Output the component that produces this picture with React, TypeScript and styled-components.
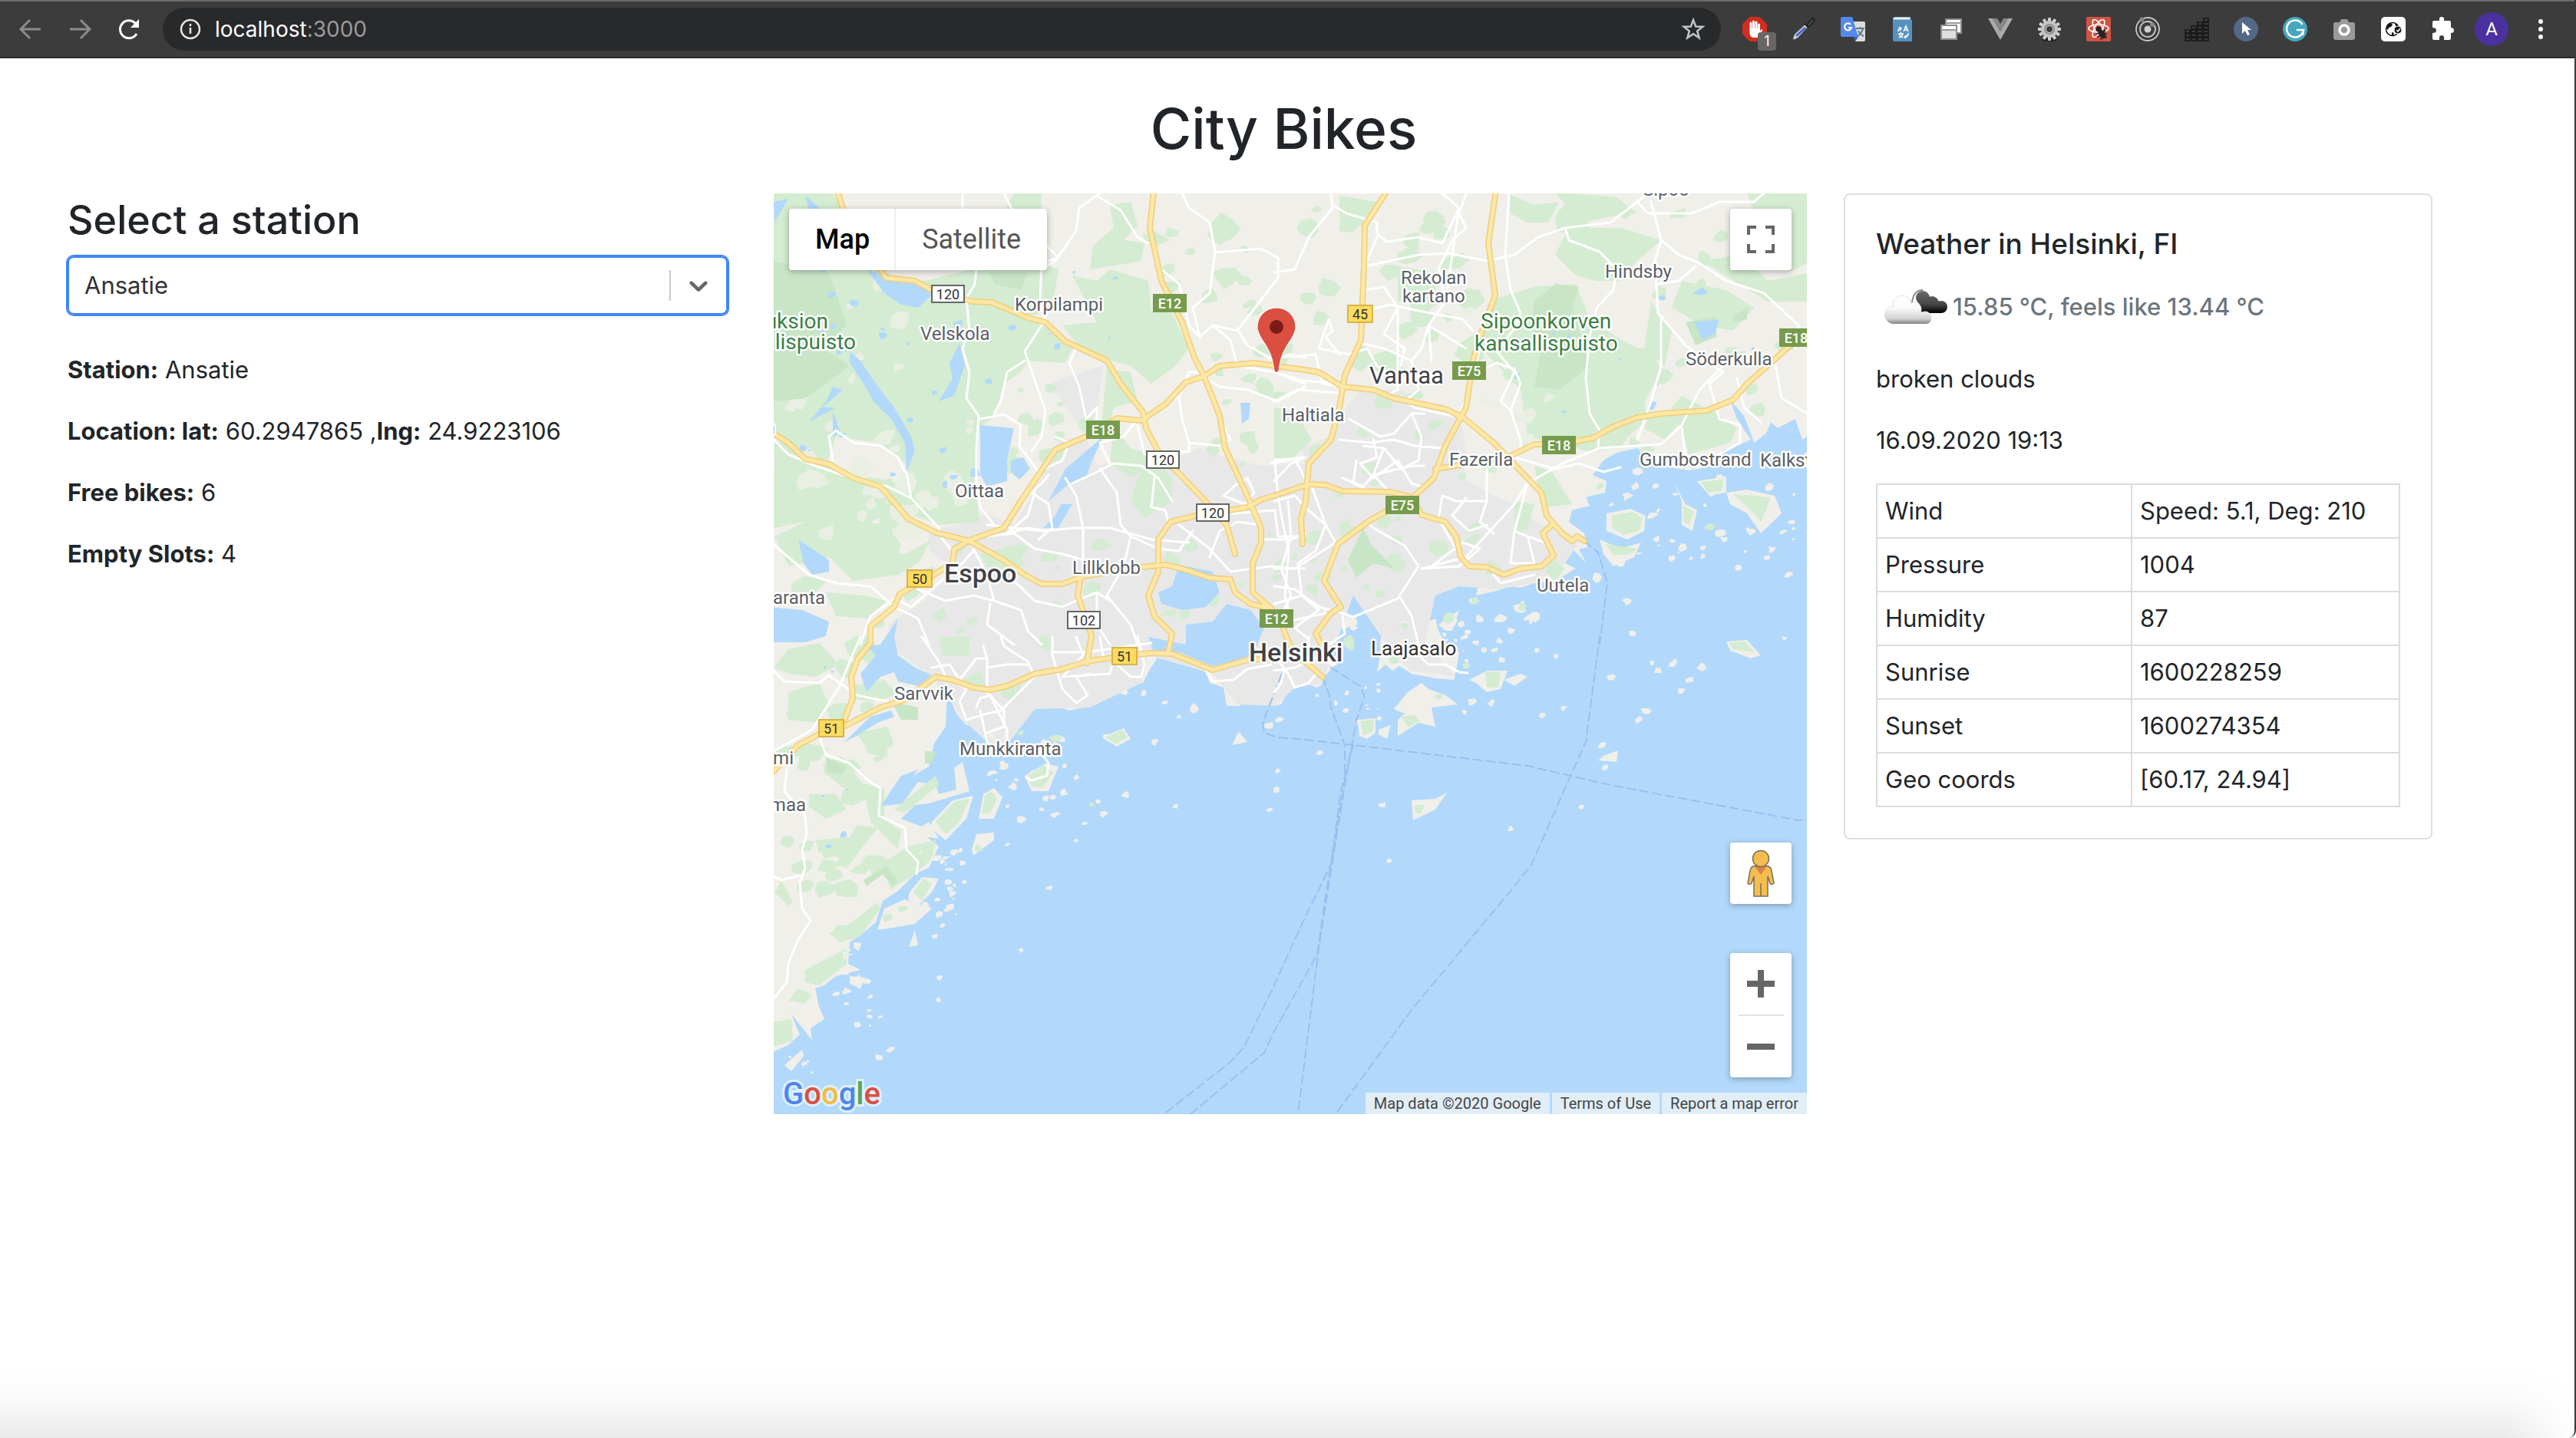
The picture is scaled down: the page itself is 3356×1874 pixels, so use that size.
import React, { useState } from 'react';
import styled, { createGlobalStyle } from 'styled-components';

const sans = '"Inter", "Liberation Sans", sans-serif';
const mapFont = 'Roboto, "Liberation Sans", sans-serif';

const GlobalStyle = createGlobalStyle`
  *, *::before, *::after { box-sizing: border-box; }
  body {
    margin: 0;
    background: #fff;
    color: #212529;
    font-family: ${sans};
    font-size: 31px;
    line-height: 48px;
  }
  button { font: inherit; border: 0; padding: 0; background: none; cursor: pointer; }
`;

/* ---------- browser bar ---------- */

const Page = styled.div`
  min-height: 100vh;
  display: flex;
  flex-direction: column;
  background: #fff;
  border-right: 2px solid #3b3a40;
  border-bottom-right-radius: 10px;
`;

const Bar = styled.header`
  height: 76px;
  display: flex;
  align-items: center;
  padding: 0 12px 0 8px;
  background: #3c3c3c;
  border-top: 2px solid #6b6b6b;
  border-bottom: 2px solid #29292b;
`;

const BarButton = styled.button<{ $dim?: boolean }>`
  width: 64px;
  height: 56px;
  flex: none;
  display: flex;
  align-items: center;
  justify-content: center;
  position: relative;
  color: ${(p) => (p.$dim ? '#8b8b8b' : '#fff')};
`;

const Omnibox = styled.div`
  flex: 1;
  height: 56px;
  margin: 0 12px;
  padding: 0 20px;
  display: flex;
  align-items: center;
  gap: 16px;
  border-radius: 28px;
  background: #28292b;
  color: #fff;
  font-size: 28px;
`;

const Address = styled.span`
  flex: 1;
  span { color: #9a9b9d; }
`;

const StarButton = styled.button`
  display: flex;
  color: #c4c5c6;
`;

const Badge = styled.span`
  position: absolute;
  right: 4px;
  bottom: 0;
  width: 24px;
  height: 24px;
  border-radius: 4px;
  background: #666;
  color: #fff;
  font-size: 18px;
  line-height: 24px;
  text-align: center;
`;

const Avatar = styled.span`
  width: 44px;
  height: 44px;
  border-radius: 50%;
  background: #4b309f;
  color: #fff;
  font: 24px/44px ${mapFont};
  text-align: center;
`;

const Icon = ({ size = 32, children }: { size?: number; children: React.ReactNode }) => (
  <svg width={size} height={size} viewBox="0 0 32 32" fill="none" aria-hidden="true">
    {children}
  </svg>
);

const gearTeeth = Array.from({ length: 12 }, (_, i) => i * 30);

const extensions: { name: string; icon: React.ReactNode; badge?: string }[] = [
  {
    name: 'Ad blocker',
    badge: '1',
    icon: (
      <Icon>
        <path d="M9.500 0h13L32 9.500v13L22.500 32h-13L0 22.500v-13z" fill="#d22d20" />
        <path d="M11 17V8M14.500 16V6M18 16V7M21.500 18v-8" stroke="#fff" strokeWidth="3" strokeLinecap="round" />
        <path d="M9.500 15h13.500v3l2.500-2q1.500 1-.5 4l-4 6q-1 1-3 1h-4q-4.500-1-4.500-6z" fill="#fff" />
      </Icon>
    ),
  },
  {
    name: 'Color picker',
    icon: (
      <Icon>
        <path d="M2 29l2-6L18 10l3 3L8 27l-4 2z" fill="#dfe3ea" stroke="#8a8f99" />
        <path d="M5 26l1-3 11-10 2 2L8 25z" fill="#3f62c9" />
        <path d="M17 9l5 5M20 11l7-9 3 2-7 9z" stroke="#222" strokeWidth="2" fill="#555" />
      </Icon>
    ),
  },
  {
    name: 'Translate',
    icon: (
      <Icon>
        <path d="M14 6h16q2 0 2 2v22q0 2-2 2H19z" fill="#dcdcdc" />
        <path d="M20 15h11M25.500 13v3M29 15q-1 6-7 10M23 18q2 5 7 7" stroke="#5f7d86" strokeWidth="2" />
        <path d="M0 2q0-2 2-2h13l8 26H2q-2 0-2-2z" fill="#5488ea" />
        <path d="M17 26h6l-4 6z" fill="#3460c4" />
        <path d="M13 10a4.500 4.500 0 1 0 1 4h-4" stroke="#fff" strokeWidth="2.200" />
      </Icon>
    ),
  },
  {
    name: 'Dictionary',
    icon: (
      <Icon>
        <path d="M4 3q0-3 3-3h20v4H4z" fill="#f3f7fa" stroke="#3c7fb2" />
        <path d="M4 4h25v28H6q-2 0-2-2z" fill="#5592c0" />
        <path d="M18 19l3-7 3 7M19 17h4M11 19q0-4 3-4M12 13l3 2-2 3M11 22h7M14.500 20v2M17 22q-1 4-5 5M12 23l5 4M24 21q0 5-4 5M22 24l-3 2 2 2" stroke="#fff" strokeWidth="1.500" />
      </Icon>
    ),
  },
  {
    name: 'Windows',
    icon: (
      <Icon>
        <path d="M9 3h20v18H9z" fill="#fff" stroke="#8c8c8c" strokeWidth="2" />
        <path d="M9 8h20" stroke="#999" strokeWidth="2" />
        <path d="M3 11h20v18H3z" fill="#dedede" stroke="#8c8c8c" strokeWidth="2" />
        <path d="M4 14h18" stroke="#fff" strokeWidth="4" />
        <path d="M3 17h20" stroke="#999" strokeWidth="2" />
      </Icon>
    ),
  },
  {
    name: 'Vue devtools',
    icon: (
      <Icon>
        <path d="M0 2h6l10 17L26 2h6L16 30z" fill="#aaa" />
        <path d="M6 2h6l4 7 4-7h6L16 19z" fill="#878787" />
      </Icon>
    ),
  },
  {
    name: 'Settings',
    icon: (
      <Icon>
        <ellipse cx="16" cy="30" rx="10" ry="2" fill="#222" />
        {gearTeeth.map((a) => (
          <rect key={a} x="14" y="1" width="4" height="7" rx="1" fill="#cfcfcf" transform={`rotate(${a} 16 16)`} />
        ))}
        <circle cx="16" cy="16" r="11" fill="#c4c4c4" />
        <circle cx="16" cy="16" r="7" fill="#8d8d8d" />
        <circle cx="16" cy="16" r="4.500" fill="#3c3c3c" stroke="#ddd" />
      </Icon>
    ),
  },
  {
    name: 'React devtools',
    icon: (
      <Icon>
        <rect width="32" height="32" rx="2" fill="#cf5443" />
        <g stroke="#fff" strokeWidth="1.600">
          <ellipse cx="16" cy="15" rx="13" ry="5" />
          <ellipse cx="16" cy="15" rx="13" ry="5" transform="rotate(60 16 15)" />
          <ellipse cx="16" cy="15" rx="13" ry="5" transform="rotate(120 16 15)" />
        </g>
        <circle cx="16" cy="16" r="3.500" fill="#2a2222" />
        <ellipse cx="20" cy="22" rx="4" ry="6" fill="#2a2222" transform="rotate(-30 20 22)" />
        <path d="M13 22l12-4M14 26l13-4M18 29l9-3M23 16l2 12" stroke="#2a2222" strokeWidth="1.500" />
      </Icon>
    ),
  },
  {
    name: 'Orbit',
    icon: (
      <Icon>
        <circle cx="16" cy="16" r="15" stroke="#c8c8c8" strokeWidth="1.800" />
        <circle cx="16" cy="16" r="10" stroke="#c8c8c8" strokeWidth="1.800" />
        <circle cx="16" cy="16" r="4.500" fill="#cfcfcf" />
        <circle cx="8.500" cy="3.500" r="3" fill="#858585" />
        <circle cx="22" cy="10" r="3" fill="#858585" />
      </Icon>
    ),
  },
  {
    name: 'Equalizer',
    icon: (
      <Icon>
        {[3, 4, 5, 6].flatMap((n, col) =>
          Array.from({ length: n }, (_, i) => (
            <rect key={`${col}-${i}`} x={1 + col * 8} y={27 - i * 5} width="6" height="4" stroke="#161616" strokeWidth="1.500" />
          )),
        )}
      </Icon>
    ),
  },
  {
    name: 'Pointer',
    icon: (
      <Icon>
        <circle cx="16" cy="16" r="16" fill="#536987" />
        <path d="M11 7v15l4-4 3 6 3-1-3-6h5z" fill="#fff" />
      </Icon>
    ),
  },
  {
    name: 'Writing check',
    icon: (
      <Icon>
        <circle cx="16" cy="16" r="16" fill="#45a6bf" />
        <path d="M25 9a11 11 0 1 0 2 8h-8M27 17l-1 6" stroke="#fff" strokeWidth="2.500" strokeLinecap="round" />
      </Icon>
    ),
  },
  {
    name: 'Screenshot',
    icon: (
      <Icon>
        <path d="M4 7h6l2-4h8l2 4h5q3 0 3 3v17q0 3-3 3H5q-3 0-3-3V10q0-3 2-3z" fill="#9a9a9a" />
        <circle cx="16" cy="17" r="6" stroke="#fff" strokeWidth="3.500" />
      </Icon>
    ),
  },
  {
    name: 'Cookies',
    icon: (
      <Icon>
        <rect width="32" height="32" rx="5" fill="#fff" />
        <circle cx="15" cy="16" r="8.500" fill="#fff" stroke="#111" strokeWidth="1.500" />
        <path d="M7 15l2-5 4-2 2 2-2 3-3 1-1 3zM18 8l3 2 1 3-3-1zM14 20l3 1-1 3h-2z" fill="#111" />
        <circle cx="22" cy="17" r="5" fill="#111" stroke="#fff" />
        <path d="M20 17l2 2 3-4" stroke="#fff" strokeWidth="1.500" />
      </Icon>
    ),
  },
  {
    name: 'Extensions',
    icon: (
      <Icon>
        <path d="M3 7q0-2 2-2h7q-1-5 3-5t3 5h7q2 0 2 2v7q4 0 4 3.500T27 21v7q0 2-2 2h-7q1-6-3-6t-3 6H5q-2 0-2-2v-7q5 0 5-3.500T3 14z" fill="#fff" />
      </Icon>
    ),
  },
];

/* ---------- page layout ---------- */

const Main = styled.main`
  flex: 1;
  padding: 44px 185px 0 88px;
`;

const Title = styled.h1`
  margin: 0 0 36px 88px;
  font-size: 73px;
  line-height: 96px;
  font-weight: 500;
  text-align: center;
`;

const Columns = styled.div`
  display: grid;
  grid-template-columns: 872fr 1346fr 767fr;
  column-gap: 48px;
  align-items: start;
`;

const StationColumn = styled.section`
  padding-right: 12px;
`;

const FieldLabel = styled.label`
  display: block;
  margin-bottom: 12px;
  font-size: 52px;
  line-height: 70px;
  font-weight: 500;
`;

const SelectBox = styled.div`
  display: flex;
  align-items: center;
  height: 76px;
  margin-bottom: 48px;
  padding-right: 16px;
  border: 2px solid #3f86f7;
  border-radius: 8px;
  box-shadow: 0 0 0 2px #3f86f7;
`;

const Select = styled.select`
  flex: 1;
  height: 72px;
  padding: 0 20px;
  appearance: none;
  border: 0;
  outline: 0;
  background: none;
  color: #333;
  font: 31px/48px ${sans};
`;

const Separator = styled.span`
  width: 2px;
  height: 40px;
  margin-right: 16px;
  background: #ccc;
`;

const Fact = styled.p`
  margin: 0 0 32px;
  b { font-weight: 700; }
`;

/* ---------- weather ---------- */

const Card = styled.section`
  padding: 40px;
  border: 2px solid #dfdfdf;
  border-radius: 8px;
`;

const CardTitle = styled.h2`
  margin: 0 0 8px;
  font-size: 37px;
  line-height: 48px;
  font-weight: 500;
`;

const Temperature = styled.div`
  display: flex;
  align-items: center;
  margin-bottom: 20px;
  color: #6c757d;
  font-weight: 500;
`;

const CardText = styled.p`
  margin: 0 0 32px;
`;

const Table = styled.table`
  width: 100%;
  border-collapse: collapse;
  td, th {
    height: 70px;
    padding: 0 10px;
    border: 2px solid #dcdcdc;
    font-weight: 400;
    text-align: left;
    white-space: nowrap;
  }
  th { width: 332px; }
`;

const readings: [string, string][] = [
  ['Wind', 'Speed: 5.1, Deg: 210'],
  ['Pressure', '1004'],
  ['Humidity', '87'],
  ['Sunrise', '1600228259'],
  ['Sunset', '1600274354'],
  ['Geo coords', '[60.17, 24.94]'],
];

const CloudIcon = () => (
  <svg width="100" height="100" viewBox="0 0 100 100" aria-label="broken clouds" role="img">
    <defs>
      <linearGradient id="dark" gradientUnits="userSpaceOnUse" x1="0" y1="30" x2="0" y2="58">
        <stop offset="0" stopColor="#6a6a6a" />
        <stop offset="0.600" stopColor="#454545" />
        <stop offset="1" stopColor="#000" />
      </linearGradient>
      <linearGradient id="light" gradientUnits="userSpaceOnUse" x1="0" y1="34" x2="0" y2="73">
        <stop offset="0" stopColor="#fff" />
        <stop offset="0.450" stopColor="#fafafa" />
        <stop offset="0.800" stopColor="#d2d2d2" />
        <stop offset="1" stopColor="#777" />
      </linearGradient>
    </defs>
    <path d="M47 44q2-16 14-16" stroke="#8a8a8a" strokeWidth="2" fill="none" />
    <g fill="url(#dark)">
      <circle cx="61" cy="38" r="9" />
      <circle cx="73" cy="45" r="9" />
      <circle cx="85" cy="50" r="8" />
      <path d="M54 38h20l12 20H60z" />
    </g>
    <g fill="url(#light)" stroke="#e4e4e4">
      <circle cx="34" cy="47" r="12" />
      <circle cx="22" cy="60" r="11" />
      <circle cx="50" cy="53" r="9" />
      <circle cx="64" cy="64" r="8" />
    </g>
    <path d="M23 50l12-9 14 8 9 12 7-4q7 3 7 8 0 7-7 7H22q-9-1-9-10z" fill="url(#light)" />
  </svg>
);

/* ---------- map geometry ---------- */

// Shapes are surveyed on four sheets; each has its origin and units per map pixel.
const sheets: Record<string, [number, number, number, number]> = {
  nw: [-8, -12, 2.24, 2.613],
  ne: [652, -12, 2.24, 2.613],
  sw: [-8, 578, 2.24, 2.489],
  se: [652, 578, 2.24, 2.489],
};

const toPoints = (def: string): [number, number][] => {
  let sheet = sheets.nw;
  const out: [number, number][] = [];
  def.trim().split(/\s+/).forEach((t) => {
    if (sheets[t]) {
      sheet = sheets[t];
    } else {
      const [x, y] = t.split(',').map(Number);
      out.push([Math.round(sheet[0] + x / sheet[2]), Math.round(sheet[1] + y / sheet[3])]);
    }
  });
  return out;
};
const line = (def: string) => 'M' + toPoints(def).map((p) => p.join(' ')).join('L');
const area = (defs: string[]) => defs.map((d) => line(d) + 'Z').join('');
const lines = (defs: string[]) => defs.map(line).join('');

const random = (seed: number) => () => {
  seed = (seed * 1664525 + 1013904223) % 4294967296;
  return seed / 4294967296;
};

const blob = (cx: number, cy: number, r: number, rnd: () => number) => {
  const n = 7;
  let d = '';
  const turn = rnd() * 6;
  const flat = 0.6 + rnd() * 0.4;
  for (let i = 0; i < n; i++) {
    const a = turn + (i / n) * Math.PI * 2;
    const q = r * (0.55 + rnd() * 0.65);
    const x = Math.cos(a) * q;
    const y = Math.sin(a) * q * flat;
    d += `${i ? 'L' : 'M'}${Math.round(cx + x + y * 0.3)} ${Math.round(cy + y - x * 0.3)}`;
  }
  return d + 'Z';
};

const scatter = (boxes: [number, number, number, number, number, number][], seed: number) => {
  const rnd = random(seed);
  return boxes
    .map(([x, y, w, h, n, r]) =>
      Array.from({ length: n }, () => blob(x + rnd() * w, y + rnd() * h, r * (0.4 + rnd()), rnd)).join(''),
    )
    .join('');
};

const blobsAt = (def: string, r: number, seed: number) => {
  const rnd = random(seed);
  return toPoints(def).map(([x, y]) => blob(x, y, r * (0.7 + rnd() * 0.7), rnd)).join('');
};

const mainland = area([
  `nw 0,0 ne 1600,0 1600,860 1568,850 1540,870 1520,800 1470,830 1450,810 1435,850 1400,880 1390,850 1370,790 1330,735 1350,800 1390,870 1340,895 1310,905 1290,960
   1210,975 1130,960 1060,900 1040,905 1000,915 960,940 930,990 970,1010 965,1050 910,1065 920,1095 870,1110 860,1150 905,1190 915,1235 890,1245 912,1290 870,1240 850,1290 880,1310
   820,1350 760,1360 720,1375 690,1370 650,1385 590,1400 600,1340 630,1300 660,1210 625,1250 600,1300 560,1330 560,1370 500,1370 470,1400 450,1440 430,1500 470,1480 480,1520 500,1568
   se 540,50 530,110 525,140 470,135 400,120 365,95 345,110 325,90 300,115 310,60 ne 310,1568 315,1500 330,1450 380,1430 330,1410 280,1440 265,1400 275,1380 320,1370 335,1320 285,1270 265,1290 215,1345 200,1290 210,1250 190,1240 180,1300
   215,1400 200,1460 240,1480 245,1500 180,1520 150,1568 se 180,90 145,130 138,155 125,165 100,155 60,165 42,170 20,220 0,225
   sw 1485,215 1470,180 1425,190 1445,120 1400,110 1375,130 1380,225 1340,225 1330,165 1290,150 1275,105 1240,85 1140,62 1110,115 1095,150 1040,150 960,180 940,225 880,240 830,220 780,235 725,285 700,350 730,360
   645,350 630,290 580,285 550,250 525,180 520,290 485,345 470,420 440,440 395,480 330,550 395,540 440,470 490,480 500,510 550,495 545,425 570,405 590,500 530,520 470,540 430,545 390,590 450,615 470,600 500,655
   465,650 500,680 470,750 430,770 380,825 335,855 315,925 290,950 240,990 235,1060 270,1080 200,1100 165,1130 140,1140 150,1200 165,1240 125,1270 130,1310 110,1280 70,1225 95,1290 60,1325 0,1355`,
]);

const urban = area([
  `nw 470,1180 560,1160 640,1120 720,1160 800,1000 850,870 930,860 960,960 1050,940 1160,960 1200,930 1260,900 1340,930 1440,960 1568,950 ne 80,900 180,850 210,760 250,700 380,700 400,740 540,780 560,900 550,1000 640,1060 700,1090
   780,1160 900,1200 850,1290 760,1360 650,1380 540,1370 470,1400 440,1568 se 530,130 400,110 350,60 ne 230,1400 200,1500 se 140,150 60,165 0,225 sw 1370,220 1300,120 1110,60 1090,150 940,230 780,235 700,350 640,340 580,280
   480,130 380,50 nw 350,1500 460,1420 540,1300 470,1250`,
  'nw 820,680 860,660 980,620 960,780 930,860 860,740',
]);

const parks = area([
  'nw 0,31 190,31 240,110 330,300 420,340 600,290 720,31 800,31 790,270 850,290 830,420 770,450 890,560 870,610 760,600 740,640 690,680 660,790 620,830 600,1000 620,1150 500,1160 430,1130 380,1060 410,960 330,880 200,860 170,960 100,940 0,840',
  'nw 1000,70 1060,60 1080,140 1040,190 1100,200 1090,260 1000,280 940,290 950,210 1010,150',
  'nw 890,310 960,330 1000,290 1110,330 1120,430 1180,440 1230,560 1190,620 1120,680 1060,620 980,590 900,540 860,480 960,470',
  'nw 990,630 1060,640 1080,740 1010,760 990,850 975,820',
  'nw 1010,820 1060,900 1150,930 1130,960 1060,1000 1000,950',
  'nw 20,870 180,960 330,1040 360,1120 280,1160 210,1240 110,1150 18,1170',
  'nw 20,1200 110,1150 250,1240 400,1260 480,1210 440,1290 380,1330 250,1350 180,1270 60,1300',
  'nw 170,1390 280,1400 350,1420 290,1480 200,1470',
  'nw 250,1170 350,1150 390,1230 370,1290 270,1300',
  'nw 620,1260 720,1230 750,1290 700,1340 640,1300',
  'nw 1130,930 1180,1000 1180,1080 1100,1140 1060,1080 1080,1000',
  'ne 650,390 760,350 880,340 920,460 1000,520 1060,560 1090,650 1080,780 1010,900 920,910 850,890 740,860 720,700 620,580 600,500',
  'ne 860,150 1010,150 1130,190 1050,270 1010,330 940,330 880,310 820,240',
  'ne 970,560 1100,560 1130,640 1070,760 1110,780 1010,880 930,820 910,700',
  'ne 1100,780 1200,790 1140,870 1080,830',
  'ne 1190,720 1290,780 1350,830 1330,880 1210,920 1180,820 1160,760',
  'ne 860,31 1000,45 1060,100 980,110 900,130 820,31',
  'ne 680,31 760,70 830,60 800,130 740,130 690,100',
  'ne 1190,330 1320,360 1400,420 1340,500 1250,480 1160,420',
  'ne 1250,260 1360,240 1440,330 1568,300 1568,400 1440,400 1340,330',
  'ne 1380,31 1568,31 1568,260 1500,300 1430,170',
  'ne 1100,400 1160,500 1140,620 1080,560',
  'ne 360,280 470,300 470,380 360,400',
  'ne 190,40 300,60 260,140 190,110',
  'ne 0,760 60,770 110,870 50,940 0,930',
  'ne 760,960 810,980 870,1090 800,1100 770,1040',
  'ne 700,1080 760,1090 740,1170 700,1200',
  'ne 800,1270 850,1310 820,1350 790,1320',
  'sw 60,40 150,20 210,90 140,130 60,120 18,100',
  'sw 60,180 150,150 180,220 150,280 60,270',
  'sw 240,160 340,140 380,190 310,210 240,200',
  'sw 100,340 180,360 150,400 90,410',
  'sw 180,400 240,420 280,480 220,490 180,450',
  'sw 260,310 350,290 370,350 300,380',
  'sw 120,510 200,510 230,560 170,590 120,550',
  'sw 280,480 340,490 340,590 390,630 380,690 300,600',
  'sw 370,560 490,450 500,480 400,570',
  'sw 140,660 240,650 220,720 150,700',
  'sw 200,740 260,610 320,620 230,750',
  'sw 330,740 410,680 490,660 480,720 430,770 360,820',
  'sw 180,960 240,930 320,860 330,880 270,970 210,990',
  'sw 110,1080 230,1010 230,1060 150,1130 110,1120',
  'sw 18,1250 70,1240 75,1310 18,1330',
  'sw 20,830 40,790 75,860 60,870',
  'sw 60,1180 90,1140 130,1160 110,1190',
  'sw 500,0 590,0 590,60 510,60',
  'sw 570,140 620,110 640,170 590,165',
  'sw 670,160 740,140 730,200 690,200',
]);

const deepParks = area([
  'nw 18,260 180,300 230,480 160,560 240,620 110,730 18,740',
  'nw 650,300 760,300 740,360 660,340',
  'ne 760,400 820,340 890,350 870,420 920,620 830,700 760,690 780,560 750,480',
  'ne 1200,470 1290,450 1290,520 1230,550',
  'ne 1340,450 1380,420 1380,460 1340,470',
  'ne 260,1170 285,1230 330,1280 350,1310 290,1290 240,1340 215,1280',
  'sw 280,790 345,745 380,790 365,810 335,770 290,810',
  'sw 360,210 440,230 440,270 390,270',
  'sw 460,370 490,370 480,410 460,410',
  'sw 170,390 230,420 220,445 175,440',
]);

const lakes = area([
  'nw 240,570 270,600 310,670 370,760 420,860 430,910 405,980 400,880 360,800 310,740 280,680 240,610',
  'nw 290,290 370,330 440,330 480,380 440,420 390,410 340,370',
  'nw 560,540 575,620 545,720 500,740 540,660 530,610',
  'nw 620,820 720,830 700,940 700,1010 640,1030 620,990',
  'nw 710,940 745,930 765,970 735,1005 710,980',
  'nw 980,860 940,960 930,1000 880,1020 820,1080 870,970',
  'nw 855,1090 890,1090 870,1130 850,1170 805,1170 840,1130',
  'nw 90,1210 180,1280 180,1320 130,1330 105,1290',
  'nw 0,1440 100,1450 180,1490 170,1540 110,1560 0,1560',
  'nw 1380,745 1410,745 1405,800 1385,815',
  'nw 190,690 220,700 160,760 200,760 120,810 170,740',
  'nw 190,770 210,840 190,860',
  'nw 110,40 160,90 120,90',
  'nw 18,60 60,50 20,130',
  'nw 1200,1295 1300,1320 1320,1390 1280,1440 1210,1450 1150,1430 1140,1390 1180,1370',
  'nw 1220,1500 1300,1490 1340,1430 1410,1450 1450,1510 1430,1568 sw 1410,70 1300,95 1200,50 1125,45 1110,0 nw 1220,1568',
  'nw 380,1480 330,1568 sw 290,30 315,60 270,120 290,180 330,130 370,115 380,145 440,160 480,125 430,100 380,60 370,0',
  'ne 1225,470 1300,460 1285,510 1250,530',
  'ne 1220,370 1250,350 1265,370 1240,380',
  'sw 360,240 300,260 225,340 260,320 320,280 370,260',
  'sw 440,430 390,450 330,550 380,520',
]);

const islands =
  area([
    'ne 970,1120 1040,1105 1085,1130 1080,1180 1030,1210 970,1180',
    'ne 1235,1010 1320,995 1320,1050 1270,1060',
    'ne 1320,1050 1380,1040 1460,1060 1480,1120 1420,1190 1380,1120 1330,1090',
    'ne 1165,1015 1200,1090 1235,1110 1220,1180 1190,1160 1190,1080',
    'ne 950,1210 1010,1240 1070,1220 1050,1270 990,1300 960,1260',
    'ne 480,1500 540,1450 520,1520 500,1520',
    'se 430,150 450,170 500,190 535,220 460,230 470,290 420,280 360,320 360,270 380,250 350,235 390,180',
    'se 570,140 620,110 680,110 660,170 620,180 590,150',
    'se 670,140 720,120 740,130 700,160',
    'se 245,270 295,265 295,310 270,330 248,320',
    'se 305,300 340,285 330,330 305,315',
    'se 1320,15 1380,10 1420,60 1390,70 1330,45',
    'se 400,530 470,525 505,505 470,560 405,595',
    'se 960,385 1003,368 1000,405 945,400',
    'sw 480,600 540,530 600,515 580,590 520,660 475,620',
    'sw 630,510 660,490 685,520 660,590 615,590',
    'sw 750,450 810,410 850,420 820,500 770,500',
    'sw 975,325 1040,295 1060,330 1020,355',
    'sw 415,830 450,780 500,785 480,830 440,870 410,850',
    'sw 320,950 340,880 400,850 480,880 430,930 380,940',
    'sw 50,1390 100,1340 105,1360 70,1410',
    'sw 1355,350 1375,305 1400,340',
    'sw 595,690 610,640 660,635 660,660 600,710',
    'sw 412,1005 430,950 440,1000',
    'sw 240,1100 285,1105 270,1140 240,1125',
  ]) +
  blobsAt('sw 1160,215 1200,260 1245,235 1190,550 1045,510 900,660 820,815 925,605 980,575 900,455 965,535 1130,340 985,320 1095,185 1040,180 700,675 690,420 655,440 740,1015 485,970 510,935 500,1105 497,1178 360,1340 325,1365 230,1190 235,1150 265,1110 200,1160 260,1000 535,755 525,795 490,720 1460,285 1485,495 1465,560 1490,435 855,330 830,520 790,430', 5, 5) +
  blobsAt('se 1105,85 1120,110 985,130 1190,175 1245,100 1215,140 1165,85 1085,240 1062,268 785,253 635,215 575,210 555,245 845,230 645,40 768,42 825,62 180,215 125,190 210,240 305,175 315,545 690,622 335,728 897,553 965,423 957,350 15,270 135,375 1490,5', 5, 9) +
  blobsAt('ne 1055,1030 1110,1030 1060,980 1160,1215 1115,1210 1105,1130 1270,1170 1300,1190 1355,1305 1440,1270 940,1340 1030,1420 1045,1530 720,1440 580,1420 520,1490 600,1480 760,1470 660,1480 690,1520 1500,1330 1510,1150 1445,1030 1190,1240 1160,1275 1300,1000 1030,1060 1010,1290 230,1510 300,1390 380,1500 590,1560', 6, 3) +
  scatter(
    [
      [280, 700, 100, 120, 26, 4],
      [190, 850, 60, 90, 22, 4],
      [90, 980, 50, 110, 16, 4],
      [1090, 390, 240, 90, 26, 4],
      [870, 550, 120, 60, 18, 4],
      [740, 630, 60, 60, 8, 3],
      [20, 1120, 40, 30, 6, 3],
    ],
    17,
  );

const islandParks =
  area([
    'ne 985,1130 1045,1115 1075,1140 1065,1180 1020,1195 985,1170',
    'ne 1245,1015 1310,1005 1305,1045 1265,1050',
    'ne 1340,1055 1400,1060 1450,1070 1420,1150 1390,1110',
    'ne 1195,1095 1225,1115 1210,1160 1195,1150',
    'ne 965,1225 1060,1240 1040,1260 990,1265',
    'se 250,275 292,270 290,305 260,320',
    'se 615,112 660,115 655,165 620,165',
    'se 370,260 410,255 425,275 390,290',
    'se 1325,18 1375,15 1400,50 1340,40',
    'se 410,545 440,545 425,575 412,570',
    'sw 490,600 545,535 590,525 560,600 520,640',
    'sw 635,515 655,500 670,525 650,570 625,575',
    'sw 760,450 805,415 835,440 800,490 770,485',
    'sw 985,325 1035,300 1050,325 1020,345',
    'sw 425,830 455,785 480,800 450,855',
  ]) + blobsAt('sw 395,880 350,910 615,685 945,545 740,310 840,330 se 480,195 560,95 350,75 220,20 ne 510,1480 590,1420 725,1440 950,1030 1270,1165 380,1505 310,1395', 7, 8);

const mapWoods = scatter(
  [
    [470, 10, 200, 230, 18, 16],
    [690, 10, 250, 220, 26, 15],
    [950, 20, 380, 330, 32, 17],
    [560, 240, 100, 130, 8, 12],
    [300, 240, 110, 120, 12, 12],
    [10, 380, 200, 200, 16, 18],
    [10, 590, 130, 200, 16, 15],
    [10, 800, 130, 180, 14, 14],
    [200, 450, 420, 160, 22, 11],
    [640, 420, 300, 100, 22, 10],
    [690, 210, 260, 200, 16, 10],
  ],
  21,
);

const mapClearings = scatter([[20, 110, 240, 300, 26, 12], [20, 330, 160, 160, 10, 18], [900, 150, 130, 180, 7, 9]], 4);
const mapPonds = scatter([[20, 60, 270, 320, 34, 5], [950, 130, 360, 170, 12, 4], [20, 600, 80, 300, 6, 4], [300, 100, 150, 120, 6, 4]], 13);

const highways = lines([
  'nw 200,0 205,31 225,100 330,290 345,320 430,330 480,360 600,400 655,403 760,455 810,470 870,535 990,600 1030,680 1095,775 1105,830 1150,930 1200,985 1285,1090 1340,1160 1365,1260',
  'nw 0,835 60,880 110,935 180,955 250,1000 330,1030 375,1090 410,1140 490,1185 590,1215 690,1280 750,1330 800,1362 860,1362 920,1335 1090,1303 1160,1297 1210,1308 1290,1340 1350,1345 1365,1390 1410,1430 1470,1445 1500,1500 se 35,0 60,60 100,90 140,130',
  'sw 0,455 90,350 150,315 230,285 330,230 400,205 490,130 540,140 600,165 650,172 700,160 780,120 860,105 930,80 1040,62 1120,53 1180,55 1300,107 1400,75 1480,70',
  'sw 225,270 248,200 245,130 265,70 300,20 nw 300,1505 370,1440 385,1395 470,1340 540,1290 545,1245 590,1212 690,1170 740,1080 790,990 840,905 930,860 1020,798 1090,805 1160,750 1220,675 1270,655 1320,620 1420,610 1500,622 ne 90,632 130,640 160,660 200,690 290,700 350,730 500,765 550,795 640,880 690,940 780,1050 795,1130 840,1190 870,1215 885,1200 905,1215',
  'nw 1130,0 1115,150 1150,330 1210,470 1245,590 1275,655 1320,790 1335,900 1400,1060 1440,1170 1440,1220 1415,1290 1415,1390 1470,1445',
  'sw 1170,50 nw 1180,1530 1130,1470 1110,1400 1140,1320 1140,1210 1175,1150 1250,1130 1400,1100 1440,1075 ne 0,1060 100,1022 150,1025 200,1045 340,1047 400,1065 430,1125 500,1150 530,1200 545,1270 570,1300 620,1305 670,1330 720,1310 780,1300 815,1265 785,1190 810,1160',
  'ne 340,0 325,31 265,140 262,280 252,530 205,650 190,760 165,870 100,950 92,1080 78,1140 83,1225',
  'ne 650,0 625,200 645,380 600,520 580,600 560,760 500,890 465,1000 410,1060 280,1145 185,1225 145,1350 195,1440 165,1460 120,1530 se 140,30',
  'ne 470,970 560,955 690,925 760,885 830,885 930,865 990,825 1060,795 1130,780 1260,770 1340,735 1380,680 1450,610 1500,555 1600,470',
  'nw 915,1335 905,1400 930,1480 945,1540 sw 932,85',
]);

const streets = lines([
  'nw 570,31 570,120 610,290 605,340 580,390 590,500 570,560 590,640 580,730 615,790 610,900 610,1000 620,1100 660,1160',
  'nw 620,800 690,785 740,820 735,890 790,980 860,940 880,880 840,860',
  'nw 690,31 720,100 850,250 800,270 795,400 810,460 750,570 810,770 800,860 770,910',
  'nw 750,600 700,640 680,740 660,780',
  'nw 970,31 910,80 900,160 840,260 800,290',
  'nw 960,40 1030,90 1080,180 1110,200',
  'nw 810,480 900,560 880,610 910,690 930,800 960,760 960,850',
  'nw 1210,31 1230,80 1290,130 1305,230 1290,370 1240,420 1260,520 1300,480 1370,500 1490,320 1490,250 1440,220 1305,232',
  'nw 1150,290 1200,340 1230,480 1260,520',
  'nw 1370,490 1400,550 1480,600 1520,580 1568,590',
  'nw 1280,660 1320,690 1400,700 1490,740 1568,690',
  'nw 1300,480 1350,530 1370,620 1480,640 1568,680',
  'nw 1110,780 1200,720 1230,640 1270,640',
  'nw 1200,720 1210,800 1230,880 1320,890 1350,870 1320,800',
  'nw 1230,880 1230,910 1100,920 1080,820',
  'nw 18,870 60,920 140,960 220,990 350,1030 420,1070 500,1170 510,1210 540,1250',
  'nw 400,980 380,930 330,890 250,880 200,840 180,860 190,940',
  'nw 405,980 420,1070',
  'nw 0,1210 60,1270 120,1330 200,1360 300,1370 370,1440 440,1480 470,1568',
  'nw 270,1568 300,1470 370,1410 420,1440 500,1360 560,1300 600,1250',
  'sw 18,370 130,300 210,160 240,80 270,0',
  'sw 18,110 50,145 150,150 180,125 260,190 350,210',
  'sw 150,320 170,380 240,410 300,470 330,490 325,580 400,620 405,690 440,730 435,770',
  'sw 55,430 50,500 110,580 115,640 100,690 110,750 95,800 100,880 125,920 90,980 60,1060 55,1120 0,1200',
  'sw 0,770 40,790 95,775',
  'nw 640,1160 800,1180 900,1170 1000,1170 1120,1210 1230,1220',
  'nw 640,1200 720,1190 780,1240 860,1260 990,1300',
  'nw 780,1050 760,1130 700,1190 760,1170 820,1180',
  'nw 870,1000 900,1060 920,1170 920,1300',
  'nw 1000,950 970,880 1040,860 1080,800',
  'nw 820,990 800,1020 770,1050 820,1090 830,1170 790,1210',
  'nw 890,1020 960,980 1010,950 1090,960 1140,1000 1180,1080',
  'nw 970,970 1020,1050 1030,1160 1060,1200 1040,1300 990,1400 1060,1500 1080,1568',
  'nw 1130,1000 1120,1100 1160,1110 1170,1150',
  'nw 1060,1200 1140,1240 1200,1250 1240,1180',
  'nw 1200,1160 1290,1240 1350,1320 1470,1300 1568,1310',
  'nw 1370,1020 1330,1060 1390,1090 1420,1050 1400,1000 1360,1030',
  'nw 1270,1090 1360,1120 1480,1110 1490,1200 1568,1200',
  'nw 1470,950 1540,935 1568,1000',
  'nw 1480,950 1490,1060 1500,1140 1520,1250 1510,1400 1530,1500',
  'nw 1440,1210 1530,1210 1568,1190',
  'nw 600,1240 640,1330 660,1420 740,1450 760,1520 800,1568',
  'nw 720,1350 780,1420 860,1440 900,1420 960,1390 1000,1420',
  'nw 440,1380 520,1420 600,1400 660,1420',
  'nw 650,1430 640,1500 720,1568',
  'nw 960,1390 960,1500 1000,1568',
  'nw 1290,1270 1320,1180 1370,1150 1440,1160',
  'sw 450,0 500,80 520,130 580,170 560,210 580,270 640,250 680,240 780,130 760,80 690,30 680,0',
  'sw 480,100 530,90 560,140 610,70 640,70 630,30',
  'sw 610,230 620,200 650,190 700,300 700,330',
  'sw 620,240 640,340',
  'sw 640,70 640,180 690,240 690,290 640,310',
  'sw 640,100 700,90 760,90',
  'sw 830,0 830,60 860,170 900,215 935,190 900,130 940,120',
  'sw 900,0 920,60 860,130 1000,120 1010,70',
  'sw 1000,70 1060,130 1090,130 1100,90 1080,0',
  'sw 970,0 980,60 1060,90',
  'sw 830,50 930,50 1120,20',
  'sw 790,360 820,410 815,450 770,465 755,455',
  'sw 1280,110 1300,145 1360,140 1400,105 1470,90',
  'ne 0,300 60,290 100,180 170,80 165,31',
  'ne 170,70 210,100 300,130 300,170 330,195 420,180 490,200 540,80 490,31',
  'ne 300,180 265,280 420,240 510,235 620,260 700,240 770,180 850,150 980,130 1060,60 1090,31',
  'ne 850,150 860,190 950,230 1000,290 990,360 940,420 920,520 910,660 920,780 950,840 945,890',
  'ne 685,31 675,240 690,360 720,440 700,490 650,570 700,640 660,740 690,770 720,870 720,910',
  'ne 540,80 520,240 500,400 450,480 460,600',
  'ne 560,31 540,100 560,150 520,190 480,290 500,400',
  'ne 265,360 320,350 360,420 320,510 380,560 370,620',
  'ne 262,430 340,410 420,430 550,460 580,500',
  'ne 360,420 360,700 340,710',
  'ne 252,540 320,560 400,600 430,560 450,480 560,560',
  'ne 160,460 130,560 220,580 270,560 300,620 360,660 440,680',
  'ne 0,590 120,580 140,680 200,690',
  'ne 0,640 80,670 200,680',
  'ne 0,740 70,700 190,710',
  'ne 160,460 170,500 150,520 190,580',
  'ne 400,600 420,700 380,740 410,760 520,790',
  'ne 600,560 570,700 540,790',
  'ne 590,640 650,610 700,630 720,680 690,770',
  'ne 1060,60 1090,100 1220,100 1300,60 1400,60 1430,31',
  'ne 1100,60 1130,190 1180,240 1240,270 1320,330 1430,370 1530,480 1520,560',
  'ne 1130,190 1110,260 1120,440 1200,550 1260,600 1310,640 1270,680 1300,800 1360,820 1360,880 1300,920',
  'ne 1120,340 1180,330 1230,280',
  'ne 1130,450 1130,620 1100,740 1060,870',
  'ne 1310,620 1240,700 1190,820 1130,885 950,900 840,950 740,1020 700,1090 560,1270 430,1310',
  'ne 1350,660 1370,760 1420,810',
  'ne 1460,600 1480,730 1568,790',
  'ne 1190,830 1200,920',
  'ne 700,930 820,970 890,950 960,980 1010,965',
  'ne 190,870 280,880 350,870 410,890 490,900',
  'ne 290,870 300,930 250,950 290,1000 360,940 400,1020 430,1030',
  'ne 220,800 310,860 350,850 400,780 440,780',
  'ne 400,780 430,860 420,940 370,970 320,900 260,890',
  'ne 200,1000 260,1030 290,990 330,1040',
  'ne 240,940 230,1020 280,1045',
  'ne 320,900 290,990 400,960 440,960',
  'ne 0,940 90,930 50,950 0,1010',
  'ne 0,1080 60,1060 90,1100 150,1160 120,1250 70,1290 80,1400 150,1450',
  'ne 110,1030 150,1160 180,1220 60,1310 0,1310',
  'ne 40,1080 50,1200 20,1310 50,1400 30,1450',
  'ne 0,1370 60,1380 130,1440 200,1460 230,1475 360,1410 420,1300 380,1230 290,1170 270,1150',
  'ne 430,1310 540,1300 600,1240 550,1220 460,1300',
  'ne 490,1060 530,1080 620,1080 600,1150 640,1190',
  'ne 490,1060 480,1140 540,1260',
  'ne 620,970 620,1080',
  'ne 560,1070 520,1130 570,1180 620,1160',
  'ne 740,1020 700,1180 690,1290 760,1290 740,1200 700,1180',
  'ne 740,1200 790,1220',
  'ne 640,1330 660,1360 760,1330',
  'ne 370,1410 400,1470 420,1568',
  'ne 0,1430 80,1400 130,1450 60,1510 100,1550',
  'ne 0,1500 80,1480 150,1460',
  'se 0,60 40,120 60,165 100,150 130,110 100,80 60,100 0,110',
  'se 30,110 20,150 0,180',
  'se 100,0 100,60 180,90',
  'se 420,60 450,90 500,90 540,115 565,118',
  'ne 200,1470 205,1530 160,1568',
]);

const ferries = lines([
  'ne 905,1215 945,1255 972,1360 950,1568 se 950,0 910,340 865,450 750,740 700,810 400,1210 180,1548',
  'sw 1500,120 1445,280 1450,310 1490,325 se 90,333 230,350 740,418 865,450 980,480 1530,594 1568,592',
  'se 165,100 250,160 265,195 240,270 205,480 165,760 130,1010 70,1548',
  'se 140,130 162,190 165,230 205,350 207,470 150,840 125,1030 0,1280 sw 1450,1350 1235,1548',
  'se 230,350 195,500 165,740 90,910 0,1130 sw 1390,1330 1350,1380 1155,1548',
]);

const labels: { text: string; at: string; size?: number; weight?: number; color?: string; end?: boolean }[] = [
  { text: 'Korpilampi', at: 'nw 722,432' },
  { text: 'Velskola', at: 'nw 446,530' },
  { text: 'uksion', at: 'nw 178,490', size: 28, color: '#3c8044', end: true },
  { text: 'lispuisto', at: 'nw 257,562', size: 28, color: '#3c8044', end: true },
  { text: 'a', at: 'nw 22,850', end: true },
  { text: 'Oittaa', at: 'nw 547,1067' },
  { text: 'Lillklobb', at: 'nw 890,1328' },
  { text: 'Espoo', at: 'nw 515,1355', size: 34, weight: 500, color: '#3f4245' },
  { text: 'aranta', at: 'nw 168,1430', end: true },
  { text: 'Sipoo', at: 'ne 1075,40' },
  { text: 'Rekolan', at: 'ne 370,340' },
  { text: 'kartano', at: 'ne 373,402' },
  { text: 'Vantaa', at: 'ne 278,680', size: 31, color: '#3f4245' },
  { text: 'Haltiala', at: 'ne 22,808' },
  { text: 'Sipoonkorven', at: 'ne 603,492', size: 28, color: '#3c8044' },
  { text: 'kansallispuisto', at: 'ne 584,566', size: 28, color: '#3c8044' },
  { text: 'Hindsby', at: 'ne 965,320' },
  { text: 'Söderkulla', at: 'ne 1201,617' },
  { text: 'Fazerila', at: 'ne 510,958' },
  { text: 'Gumbostrand', at: 'ne 1067,958' },
  { text: 'Kalkst', at: 'ne 1418,962' },
  { text: 'Uutela', at: 'ne 765,1388' },
  { text: 'Laajasalo', at: 'se 282,60', size: 26, color: '#333' },
  { text: 'Helsinki', at: 'sw 1405,80', size: 34, weight: 500, color: '#3f4245' },
  { text: 'Sarvvik', at: 'sw 369,203' },
  { text: 'Munkkiranta', at: 'sw 559,383' },
  { text: 'mi', at: 'sw 76,412', end: true },
  { text: 'maa', at: 'sw 113,566', end: true },
];

const shieldStyles = {
  e: { w: 42, fill: '#769b4c', stroke: '#769b4c', color: '#fff' },
  main: { w: 32, fill: '#fbdc5e', stroke: '#d9b24a', color: '#333' },
  local: { w: 42, fill: '#fff', stroke: '#666', color: '#333' },
};

const shields: { text: string; at: string; kind: keyof typeof shieldStyles }[] = [
  { text: '120', at: 'nw 526,374', kind: 'local' },
  { text: '120', at: 'nw 1153,938', kind: 'local' },
  { text: '120', at: 'nw 1299,1118', kind: 'local' },
  { text: '102', at: 'nw 923,1484', kind: 'local' },
  { text: 'E12', at: 'nw 1174,405', kind: 'e' },
  { text: 'E18', at: 'nw 978,836', kind: 'e' },
  { text: 'E12', at: 'nw 1485,1479', kind: 'e' },
  { text: 'E75', at: 'ne 570,635', kind: 'e' },
  { text: 'E75', at: 'ne 375,1092', kind: 'e' },
  { text: 'E18', at: 'ne 832,888', kind: 'e' },
  { text: 'E18', at: 'ne 1524,522', kind: 'e' },
  { text: '50', at: 'nw 443,1343', kind: 'main' },
  { text: '45', at: 'ne 251,441', kind: 'main' },
  { text: '51', at: 'sw 1042,62', kind: 'main' },
  { text: '51', at: 'sw 187,296', kind: 'main' },
];

/* ---------- map view ---------- */

const MapFrame = styled.section`
  position: relative;
  aspect-ratio: 1346 / 1200;
  overflow: hidden;
  background: #b2d9fb;
  font-family: ${mapFont};
`;

const MapDrawing = styled.svg`
  display: block;
  width: 100%;
  height: 100%;
  font-family: ${mapFont};
  path { stroke-linejoin: round; stroke-linecap: round; }
  .halo { paint-order: stroke; stroke: #fff; stroke-width: 5px; stroke-linejoin: round; }
`;

const MapTypes = styled.div`
  position: absolute;
  top: 20px;
  left: 20px;
  display: flex;
  border-radius: 4px;
  background: #fff;
  box-shadow: 0 2px 8px rgba(0, 0, 0, 0.3);
`;

const MapType = styled.button<{ $active?: boolean }>`
  height: 80px;
  padding: 0 34px;
  font-size: 36px;
  font-weight: ${(p) => (p.$active ? 500 : 400)};
  color: ${(p) => (p.$active ? '#000' : '#565656')};
  & + & { box-shadow: -2px 0 0 #ececec; }
`;

const ControlStack = styled.div<{ $place: string }>`
  position: absolute;
  right: 20px;
  ${(p) => p.$place};
  width: 80px;
  display: flex;
  flex-direction: column;
  align-items: center;
  border-radius: 4px;
  background: #fff;
  box-shadow: 0 2px 8px rgba(0, 0, 0, 0.3);
`;

const Control = styled.button`
  width: 80px;
  height: 80px;
  display: flex;
  align-items: center;
  justify-content: center;
`;

const ControlLine = styled.span`
  width: 60px;
  height: 2px;
  background: #e4e4e4;
`;

const Logo = styled.a`
  position: absolute;
  left: 12px;
  bottom: 2px;
  font-size: 40px;
  line-height: 48px;
  font-weight: 500;
  text-decoration: none;
  paint-order: stroke;
  -webkit-text-stroke: 6px rgba(255, 255, 255, 0.6);
`;

const LogoLetter = styled.span<{ $tone: string }>`
  color: ${(p) => p.$tone};
`;

const Credits = styled.div`
  position: absolute;
  right: 0;
  bottom: 0;
  display: flex;
  gap: 3px;
  font-size: 20px;
  line-height: 28px;
  color: #444;
  span, a {
    padding: 0 11px;
    background: rgba(245, 245, 245, 0.7);
    color: inherit;
    text-decoration: none;
  }
`;

const CityMap = () => (
  <MapFrame aria-label="Map">
    <MapDrawing viewBox="0 0 1346 1200" preserveAspectRatio="xMidYMid slice">
      <path d={mainland} fill="#f0efea" />
      <path d={urban} fill="#e8e8e8" />
      <path d={mapWoods} fill="#d4ecd1" />
      <path d={parks} fill="#d4ecd1" />
      <path d={mapClearings} fill="#e9efe2" />
      <path d={deepParks} fill="#c8e5c6" />
      <path d={lakes} fill="#b2d9fb" />
      <path d={mapPonds} fill="#b2d9fb" />
      <path d={islands} fill="#f0efea" />
      <path d={islandParks} fill="#d4ecd1" />
      <path d={ferries} fill="none" stroke="#9dbef0" strokeWidth="2" strokeDasharray="11 6" />
      <path d={streets} fill="none" stroke="#fff" strokeWidth="3" />
      <path d={highways} fill="none" stroke="#f1cd78" strokeWidth="8" />
      <path d={highways} fill="none" stroke="#fde7a6" strokeWidth="5" />
      {labels.map(({ text, at, size = 24, weight = 400, color = '#5b5f66', end }) => {
        const [[x, y]] = toPoints(at);
        return (
          <text key={text} className="halo" x={x} y={y} fontSize={size} fontWeight={weight} fill={color} textAnchor={end ? 'end' : 'start'}>
            {text}
          </text>
        );
      })}
      {shields.map(({ text, at, kind }) => {
        const [[x, y]] = toPoints(at);
        const s = shieldStyles[kind];
        return (
          <g key={at}>
            <rect x={x - s.w / 2} y={y - 11} width={s.w} height={22} fill={s.fill} stroke={s.stroke} strokeWidth="2" />
            <text x={x} y={y + 7} fontSize={18} fontWeight={kind === 'e' ? 500 : 400} fill={s.color} textAnchor="middle">
              {text}
            </text>
          </g>
        );
      })}
      <path d="M652 231q-2-17-7-26-4-8-9-15-6-10-6-16a25 25 0 0 1 50 0q0 6-6 16-5 7-9 15-5 9-7 26-3 5-6 0z" fill="#da4f40" stroke="#fff" strokeWidth="1" />
      <circle cx="655" cy="174" r="9" fill="#7b1c16" />
    </MapDrawing>
    <MapTypes>
      <MapType $active>Map</MapType>
      <MapType>Satellite</MapType>
    </MapTypes>
    <ControlStack $place="top: 20px">
      <Control aria-label="Toggle fullscreen">
        <svg width="36" height="36" viewBox="0 0 36 36" fill="none" stroke="#666" strokeWidth="4">
          <path d="M2 12V2h10M24 2h10v10M34 24v10H24M12 34H2V24" />
        </svg>
      </Control>
    </ControlStack>
    <ControlStack $place="bottom: 274px">
      <Control aria-label="Street view">
        <svg width="36" height="62" viewBox="0 0 36 62" fill="#f5bd4d" stroke="#77705f" strokeWidth="1.500">
          <path d="M8 22q10-3 20 0 3 1 4 6l3 16q-3 3-5 0l-3-9v26H9V35l-3 9q-3 3-5 0l3-16q1-5 4-6z" />
          <path d="M18 44v17" />
          <path d="M10 22h16l-8 11z" fill="#d6854a" stroke="none" />
          <circle cx="18" cy="12" r="10.500" />
        </svg>
      </Control>
    </ControlStack>
    <ControlStack $place="bottom: 48px">
      <Control aria-label="Zoom in">
        <svg width="36" height="36" viewBox="0 0 36 36" stroke="#666" strokeWidth="8">
          <path d="M0 18h36M18 0v36" />
        </svg>
      </Control>
      <ControlLine />
      <Control aria-label="Zoom out">
        <svg width="36" height="36" viewBox="0 0 36 36" stroke="#666" strokeWidth="8">
          <path d="M0 18h36" />
        </svg>
      </Control>
    </ControlStack>
    <Logo href="#google">
      {['#4f86ec', '#d95040', '#f2bd42', '#4f86ec', '#58a55c', '#d95040'].map((tone, i) => (
        <LogoLetter key={i} $tone={tone}>{'Google'[i]}</LogoLetter>
      ))}
    </Logo>
    <Credits>
      <span>Map data ©2020 Google</span>
      <a href="#terms">Terms of Use</a>
      <a href="#report">Report a map error</a>
    </Credits>
  </MapFrame>
);

const Shade = styled.div`
  height: 90px;
  border-bottom-right-radius: 8px;
  background: linear-gradient(#fff, #fafafa 45%, #eaeaea);
  mask-image: linear-gradient(to left, transparent, #000 90px);
`;

const stations = ['Ansatie'];

export default function App() {
  const [station, setStation] = useState(stations[0]);
  return (
    <Page>
      <GlobalStyle />
      <Bar>
        <BarButton $dim aria-label="Back">
          <Icon>
            <path d="M29 16H4M15 4L3 16l12 12" stroke="currentColor" strokeWidth="3" />
          </Icon>
        </BarButton>
        <BarButton $dim aria-label="Forward">
          <Icon>
            <path d="M3 16h25M17 4l12 12-12 12" stroke="currentColor" strokeWidth="3" />
          </Icon>
        </BarButton>
        <BarButton aria-label="Reload">
          <Icon>
            <path d="M26 22a11.500 11.500 0 1 1-2-14l3 3" stroke="currentColor" strokeWidth="3" />
            <path d="M29 3v11H18z" fill="currentColor" />
          </Icon>
        </BarButton>
        <Omnibox>
          <Icon>
            <circle cx="16" cy="16" r="12" stroke="#e8e8e8" strokeWidth="2.500" />
            <path d="M16 14v8M16 9v3" stroke="#e8e8e8" strokeWidth="2.500" />
          </Icon>
          <Address>localhost<span>:3000</span></Address>
          <StarButton aria-label="Bookmark">
            <Icon>
              <path d="M16 4l3.200 8.500 9 .4-7 5.600 2.500 8.800L16 22.300 8.300 27.300l2.500-8.800-7-5.600 9-.4z" stroke="currentColor" strokeWidth="2.500" />
            </Icon>
          </StarButton>
        </Omnibox>
        {extensions.map(({ name, icon, badge }) => (
          <BarButton key={name} aria-label={name}>
            {icon}
            {badge && <Badge>{badge}</Badge>}
          </BarButton>
        ))}
        <BarButton aria-label="Profile">
          <Avatar>A</Avatar>
        </BarButton>
        <BarButton aria-label="Menu">
          <Icon>
            <g fill="#fff">
              <circle cx="16" cy="6" r="3" />
              <circle cx="16" cy="16" r="3" />
              <circle cx="16" cy="26" r="3" />
            </g>
          </Icon>
        </BarButton>
      </Bar>
      <Main>
        <Title>City Bikes</Title>
        <Columns>
          <StationColumn>
            <FieldLabel htmlFor="station">Select a station</FieldLabel>
            <SelectBox>
              <Select id="station" value={station} onChange={(e) => setStation(e.target.value)}>
                {stations.map((s) => (
                  <option key={s}>{s}</option>
                ))}
              </Select>
              <Separator />
              <svg width="40" height="40" viewBox="0 0 20 20" fill="#666" aria-hidden="true">
                <path d="M4.516 7.548c0.436-0.446 1.043-0.481 1.576 0l3.908 3.747 3.908-3.747c0.533-0.481 1.141-0.446 1.574 0 0.436 0.445 0.408 1.197 0 1.615-0.406 0.418-4.695 4.502-4.695 4.502-0.217 0.223-0.502 0.335-0.787 0.335s-0.570-0.112-0.789-0.335c0 0-4.287-4.084-4.695-4.502s-0.436-1.170 0-1.615z" />
              </svg>
            </SelectBox>
            <Fact><b>Station:</b> {station}</Fact>
            <Fact><b>Location: lat:</b> 60.2947865 ,<b>lng:</b> 24.9223106</Fact>
            <Fact><b>Free bikes:</b> 6</Fact>
            <Fact><b>Empty Slots:</b> 4</Fact>
          </StationColumn>
          <CityMap />
          <Card>
            <CardTitle>Weather in Helsinki, FI</CardTitle>
            <Temperature>
              <CloudIcon />
              15.85 °C, feels like 13.44 °C
            </Temperature>
            <CardText>broken clouds</CardText>
            <CardText>16.09.2020 19:13</CardText>
            <Table>
              <tbody>
                {readings.map(([name, value]) => (
                  <tr key={name}>
                    <th scope="row">{name}</th>
                    <td>{value}</td>
                  </tr>
                ))}
              </tbody>
            </Table>
          </Card>
        </Columns>
      </Main>
      <Shade />
    </Page>
  );
}
